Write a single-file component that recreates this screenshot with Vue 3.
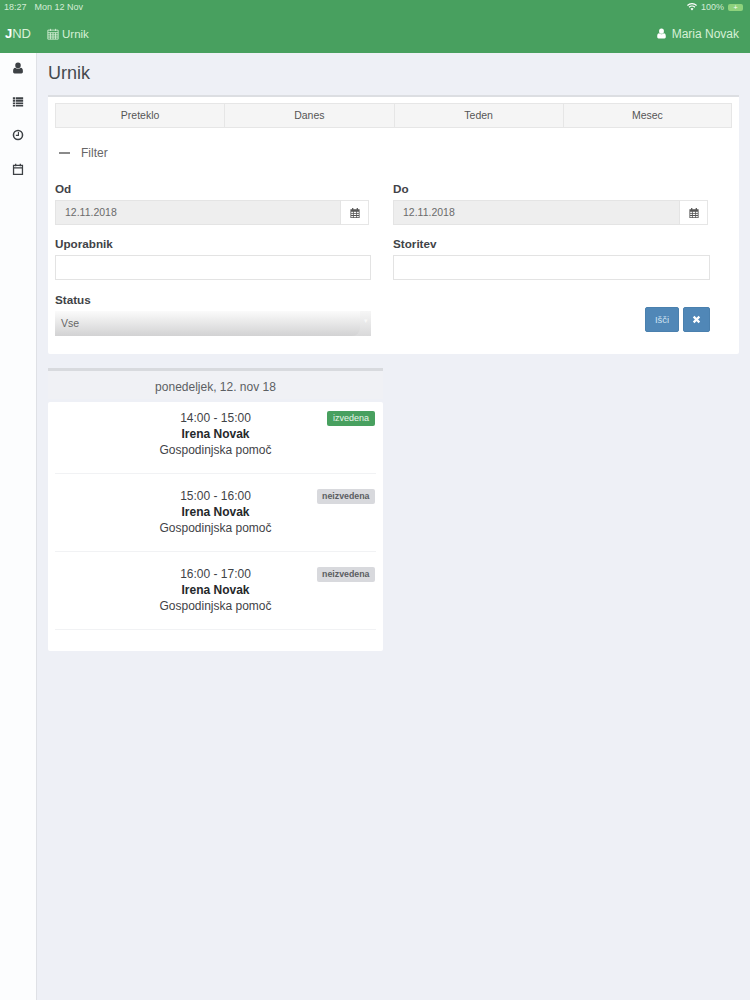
<script setup>
const tabs = ['Preteklo', 'Danes', 'Teden', 'Mesec']
const rows = [
  { time: '14:00 - 15:00', status: 'izvedena', done: true },
  { time: '15:00 - 16:00', status: 'neizvedena', done: false },
  { time: '16:00 - 17:00', status: 'neizvedena', done: false }
]
</script>

<template>
  <div class="page">
    <header class="top">
      <div class="status">
        <span class="clock">18:27</span>
        <span>Mon 12 Nov</span>
        <span class="status-right">
          <svg class="wifi" viewBox="0 0 16 12"><path d="M8 11.5 5.6 8.8a3.4 3.4 0 0 1 4.8 0ZM3.9 7.2 2.6 5.7a7.8 7.8 0 0 1 10.8 0l-1.3 1.5a5.8 5.8 0 0 0-8.2 0ZM1.3 4.3 0 2.9a11.7 11.7 0 0 1 16 0l-1.3 1.4a9.7 9.7 0 0 0-13.4 0Z"/></svg>
          <span>100%</span>
          <span class="battery"><i>+</i></span>
        </span>
      </div>
      <div class="nav">
        <div class="brand"><b>J</b>ND</div>
        <div class="crumb">
          <svg class="nav-ico" viewBox="0 0 14 14"><path fill="none" stroke="currentColor" stroke-width="1" d="M1 2.5h12v10.5H1zM1 5.5h12M4 1v2.500M10 1v2.500M4 5.500V13M7 5.500V13M10 5.500V13M1 8h12M1 10.500h12"/></svg>
          <span>Urnik</span>
        </div>
        <div class="user">
          <svg class="user-ico" viewBox="0 0 12 14"><path d="M6 0.500a3.200 3.200 0 0 1 3.200 3.400A3.200 3.200 0 0 1 6 7.300 3.200 3.200 0 0 1 2.800 3.900 3.200 3.200 0 0 1 6 .5ZM2.700 6.700C3.600 7.600 4.700 8 6 8s2.400-.4 3.300-1.300c1.500.2 2.400 1.500 2.400 3.600v1.500c0 1-.7 1.700-1.700 1.700H2c-1 0-1.700-.7-1.700-1.700v-1.500c0-2.100.9-3.400 2.400-3.600Z"/></svg>
          <span>Maria Novak</span>
        </div>
      </div>
    </header>

    <div class="body">
      <aside class="side">
        <svg class="side-ico" viewBox="0 0 12 14"><path d="M6 0.500a3.200 3.200 0 0 1 3.200 3.400A3.200 3.200 0 0 1 6 7.300 3.200 3.200 0 0 1 2.800 3.900 3.200 3.200 0 0 1 6 .5ZM2.700 6.700C3.600 7.600 4.700 8 6 8s2.400-.4 3.300-1.300c1.500.2 2.400 1.500 2.400 3.600v1.500c0 1-.7 1.700-1.700 1.700H2c-1 0-1.700-.7-1.700-1.700v-1.500c0-2.100.9-3.400 2.400-3.600Z"/></svg>
        <svg class="side-ico" viewBox="0 0 14 12"><path d="M1 .5h2.500v2.200H1zM4.300 .5H13v2.200H4.300zM1 3.500h2.500v2.200H1zM4.300 3.500H13v2.200H4.300zM1 6.500h2.500v2.200H1zM4.300 6.500H13v2.200H4.300zM1 9.500h2.500v1.800H1zM4.300 9.500H13v1.800H4.300z"/></svg>
        <svg class="side-ico" viewBox="0 0 14 14"><circle cx="7" cy="7" r="5.300" fill="none" stroke="currentColor" stroke-width="1.800"/><path fill="none" stroke="currentColor" stroke-width="1.300" d="M7.500 3.500v4H4.500"/></svg>
        <svg class="side-ico" viewBox="0 0 14 14"><path fill="none" stroke="currentColor" stroke-width="1.500" d="M1.800 2.800h10.400v10.400H1.800zM1.800 5.700h10.400M4.300 .8v3M9.700 .8v3"/></svg>
      </aside>

      <main class="main">
        <h1 class="title">Urnik</h1>

        <section class="panel">
          <div class="tabs">
            <div v-for="t in tabs" :key="t" class="tab">{{ t }}</div>
          </div>

          <div class="filter">
            <span class="dash"></span>
            <span>Filter</span>
          </div>

          <div class="form">
            <div class="col">
              <label class="lbl">Od</label>
              <div class="group">
                <div class="date">12.11.2018</div>
                <div class="addon">
                  <svg class="cal" viewBox="0 0 12 12"><path d="M2.500 0h1.500v1.500h4V0h1.500v1.500H11.500V12H.5V1.500h2ZM1.500 4.500v1.500h2V4.500Zm3 0v1.500h3V4.500Zm4 0v1.500h2V4.500Zm-7 2.500v1.500h2V7Zm3 0v1.500h3V7Zm4 0v1.500h2V7Zm-7 2.500V11h2V9.500Zm3 0V11h3V9.500Zm4 0V11h2V9.500Z"/></svg>
                </div>
              </div>
              <label class="lbl second">Uporabnik</label>
              <div class="input"></div>
              <label class="lbl second">Status</label>
              <div class="select">
                <span class="select-text">Vse</span>
                <span class="arrow">▾</span>
              </div>
            </div>
            <div class="col">
              <label class="lbl">Do</label>
              <div class="group">
                <div class="date">12.11.2018</div>
                <div class="addon">
                  <svg class="cal" viewBox="0 0 12 12"><path d="M2.500 0h1.500v1.500h4V0h1.500v1.500H11.500V12H.5V1.500h2ZM1.500 4.500v1.500h2V4.500Zm3 0v1.500h3V4.500Zm4 0v1.500h2V4.500Zm-7 2.500v1.500h2V7Zm3 0v1.500h3V7Zm4 0v1.500h2V7Zm-7 2.500V11h2V9.500Zm3 0V11h3V9.500Zm4 0V11h2V9.500Z"/></svg>
                </div>
              </div>
              <label class="lbl second">Storitev</label>
              <div class="input"></div>
              <div class="actions">
                <button class="btn">Išči</button>
                <button class="btn close">
                  <svg class="x" viewBox="0 0 10 10"><path d="M1.800 1.800 8.200 8.200M8.200 1.800 1.800 8.200"/></svg>
                </button>
              </div>
            </div>
          </div>
        </section>

        <section class="day">
          <div class="day-head">ponedeljek, 12. nov 18</div>
          <div class="card">
            <div v-for="r in rows" :key="r.time" class="row">
              <div>{{ r.time }}</div>
              <div class="name">Irena Novak</div>
              <div>Gospodinjska pomoč</div>
              <span class="badge" :class="{ done: r.done }">{{ r.status }}</span>
            </div>
          </div>
        </section>
      </main>
    </div>
  </div>
</template>

<style>
html, body { margin: 0; background: #eef0f6; }
</style>

<style scoped>
.page {
  width: 750px;
  height: 1000px;
  display: flex;
  flex-direction: column;
  overflow: hidden;
  font-family: "Liberation Sans", Arial, sans-serif;
  color: #3f4347;
  background: #eef0f6;
}
.top { height: 53px; background: #48a05f; color: #d6f0d6; flex: none; }
.status {
  height: 14px;
  padding: 0 7px 0 4px;
  display: flex;
  align-items: center;
  gap: 8px;
  font-size: 9px;
  color: #d4ecd6;
}
.status-right { margin-left: auto; display: flex; align-items: center; gap: 4px; }
.wifi { width: 10px; height: 8px; fill: #fff; }
.battery {
  width: 15px;
  height: 7px;
  background: #8ed27c;
  border-radius: 2px;
  display: flex;
  align-items: center;
  justify-content: center;
}
.battery i { font-size: 7px; line-height: 7px; font-style: normal; color: #fff; }
.nav { height: 39px; display: flex; align-items: center; padding: 0 11px 0 5px; font-size: 12px; }
.brand { width: 42px; font-size: 13px; letter-spacing: 0; }
.brand b { color: #fff; }
.crumb { display: flex; align-items: center; gap: 3px; font-size: 11.500px; }
.nav-ico { width: 12px; height: 12px; }
.user { margin-left: auto; display: flex; align-items: center; gap: 6px; font-size: 12px; }
.user-ico { width: 9px; height: 11px; fill: #fff; }

.body { flex: 1; display: flex; min-height: 0; }
.side {
  width: 36px;
  flex: none;
  background: #fcfdfe;
  border-right: 1px solid #dfe1e6;
  box-sizing: content-box;
  padding-top: 9px;
  display: flex;
  flex-direction: column;
  align-items: center;
  gap: 21.700px;
  color: #3d4145;
}
.side-ico { width: 12px; height: 12px; fill: currentColor; }
.main { flex: 1; padding: 0 11px 0 11px; min-width: 0; }
.title {
  margin: 0;
  height: 42px;
  line-height: 41px;
  font-size: 18px;
  font-weight: 400;
  color: #44494e;
}
.panel {
  background: #fff;
  border-top: 2px solid #dcdee2;
  padding: 6px 7px 18px;
  height: 259px;
  box-sizing: border-box;
  border-radius: 0 0 2px 2px;
}
.tabs { display: grid; grid-template-columns: repeat(4, 1fr); height: 25px; }
.tab {
  background: #f5f5f5;
  border: 1px solid #e6e6e6;
  margin-right: -1px;
  font-size: 10.500px;
  line-height: 23px;
  text-align: center;
  color: #555;
}
.tab:last-child { margin-right: 0; }
.filter {
  height: 55px;
  padding-bottom: 5px;
  box-sizing: border-box;
  display: flex;
  align-items: center;
  font-size: 12px;
  color: #666;
  padding-left: 4px;
}
.dash { width: 11px; height: 2px; background: #8a8a8a; margin-right: 11px; }
.form { display: flex; gap: 22px; }
.col { width: 316px; flex: none; }
.col:last-child { width: 317px; }
.lbl { display: block; height: 15px; line-height: 15px; font-size: 11.700px; font-weight: 700; color: #3f4347; margin-top: -2px; }
.second { margin-top: 12px; height: 18px; line-height: 14px; }
.input + .second { margin-top: 13px; }
.group { display: flex; width: calc(100% - 2px); height: 25px; margin-top: 4px; }
.date {
  flex: 1;
  background: #eeeeee;
  border: 1px solid #e4e4e4;
  box-sizing: border-box;
  padding-left: 9px;
  font-size: 10.500px;
  line-height: 23px;
  color: #6b6b6b;
}
.addon {
  width: 28px;
  border: 1px solid #e6e6e6;
  border-left: none;
  box-sizing: border-box;
  display: flex;
  align-items: center;
  justify-content: center;
}
.cal { width: 10px; height: 10px; fill: #555; }
.input { height: 25px; border: 1px solid #e3e3e3; box-sizing: border-box; background: #fff; }
.select {
  height: 25px;
  display: flex;
  font-size: 10.500px;
  color: #666;
  background: linear-gradient(#f6f6f6, #d9d9da);
}
.select-text {
  flex: 1;
  padding-left: 6px;
  line-height: 25px;
  border-radius: 0 0 8px 0;
  background: linear-gradient(#fbfbfb 0%, #f1f1f1 25%, #d2d2d3 100%);
}
.arrow { width: 11px; line-height: 20px; text-align: center; font-size: 7px; color: #f8f8f8; }
.actions { display: flex; justify-content: flex-end; gap: 4px; margin-top: 27px; }
.btn {
  height: 25px;
  width: 34px;
  padding: 0;
  background: #5087b7;
  border: 1px solid #4a80ae;
  border-radius: 2px;
  color: #cfe2f2;
  font-family: inherit;
  font-size: 9.500px;
  display: flex;
  align-items: center;
  justify-content: center;
}
.close { width: 27px; }
.x { width: 9px; height: 9px; fill: none; stroke: #fff; stroke-width: 2.400; }

.day { width: 335px; margin-top: 14px; }
.day-head {
  border-top: 3px solid #d8dade;
  height: 31px;
  line-height: 33px;
  text-align: center;
  font-size: 12px;
  color: #5c5f63;
  box-sizing: border-box;
  background: #f0f1f5;
}
.card {
  background: #fff;
  height: 249px;
  padding: 0 7px;
  border-radius: 2px;
  margin-top: 3px;
  box-sizing: border-box;
}
.row {
  position: relative;
  height: 78px;
  box-sizing: border-box;
  padding-top: 8px;
  border-bottom: 1px solid #f1f2f4;
  text-align: center;
  font-size: 12px;
  line-height: 16px;
  color: #3f4347;
}
.row:first-child { height: 71.500px; }
.row .name { font-weight: 700; color: #25282b; }
.badge {
  position: absolute;
  right: 1px;
  top: 10px;
  height: 15px;
  line-height: 15px;
  padding: 0 5.500px;
  border-radius: 2px;
  font-size: 8.800px;
  font-weight: 700;
  background: #d8d9dd;
  color: #5b5e62;
}
.row:first-child .badge { top: 9px; }
.row:not(:first-child) { padding-top: 14px; }
.row:not(:first-child) .badge { top: 15px; }
.badge.done { background: #48a05f; color: #e6f5e8; font-weight: 400; padding: 0 6px; font-size: 9px; }
</style>
